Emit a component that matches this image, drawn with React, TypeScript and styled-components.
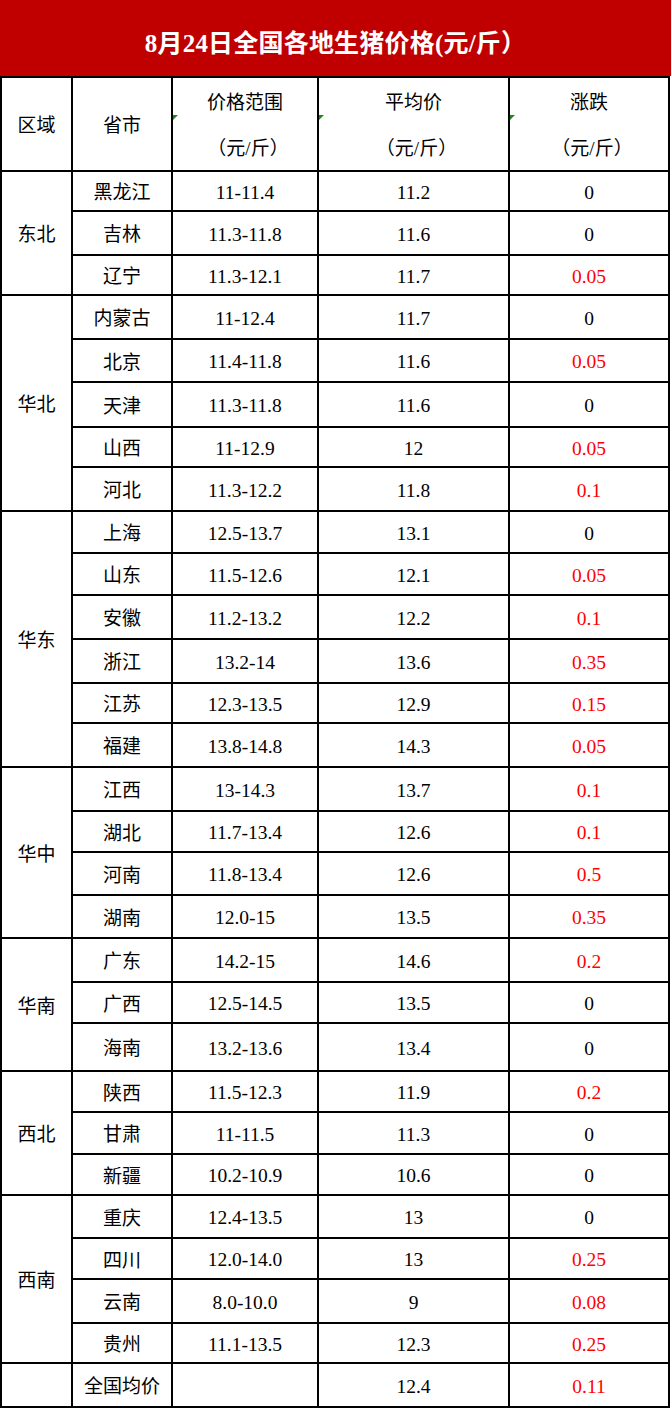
import React from "react";
import styled, { createGlobalStyle } from "styled-components";

const GlobalStyle = createGlobalStyle`
  html, body { margin: 0; padding: 0; background: #ffffff; }
  body { font-family: "Liberation Serif", "Noto Sans CJK SC", serif; }
`;

const Page = styled.div`
  width: 671px;
  display: flex;
  flex-direction: column;
`;

const Banner = styled.div`
  height: 76px;
  background: #c00000;
  color: #ffffff;
  display: flex;
  align-items: center;
  justify-content: center;
  font-family: "Liberation Serif", "Noto Sans CJK SC", serif;
  font-weight: 700;
  font-size: 25px;
  letter-spacing: 0.2px;
  padding-top: 6px;
  box-sizing: border-box;
`;

const Grid = styled.div<{ $rows: string }>`
  width: 670px;
  box-sizing: border-box;
  display: grid;
  grid-template-columns: 69px 98px 144px 189px 158px;
  grid-template-rows: ${(p) => p.$rows};
  gap: 2px;
  padding: 2px;
  background: #000000;
`;

const Cell = styled.div<{ $span?: number; $red?: boolean; $num?: boolean }>`
  position: relative;
  background: #ffffff;
  display: flex;
  align-items: center;
  justify-content: center;
  padding-top: 3px;
  box-sizing: border-box;
  grid-row: ${(p) => (p.$span ? `span ${p.$span}` : "auto")};
  color: ${(p) => (p.$red ? "#ff0000" : "#000000")};
  font-family: "Liberation Serif", "Noto Sans CJK SC", serif;
  font-size: ${(p) => (p.$num ? "19.5px" : "19px")};
  line-height: 1;
  white-space: nowrap;
`;

const HeadCell = styled.div`
  position: relative;
  background: #ffffff;
  display: flex;
  flex-direction: column;
  align-items: center;
  justify-content: center;
  padding-top: 3px;
  box-sizing: border-box;
  font-family: "Liberation Serif", "Noto Sans CJK SC", serif;
  font-size: 19px;
  line-height: 46px;
  color: #000000;
`;

const Unit = styled.span`
  padding-left: 6px;
`;

const Flag = styled.span`
  position: absolute;
  left: 0;
  top: 37px;
  width: 0;
  height: 0;
  border-top: 5px solid #1e8a1e;
  border-right: 5px solid transparent;
`;

type Row = { prov: string; range: string; avg: string; chg: string };
type Region = { name: string; rows: Row[] };

const regions: Region[] = [
  {
    name: "东北",
    rows: [
      { prov: "黑龙江", range: "11-11.4", avg: "11.2", chg: "0" },
      { prov: "吉林", range: "11.3-11.8", avg: "11.6", chg: "0" },
      { prov: "辽宁", range: "11.3-12.1", avg: "11.7", chg: "0.05" },
    ],
  },
  {
    name: "华北",
    rows: [
      { prov: "内蒙古", range: "11-12.4", avg: "11.7", chg: "0" },
      { prov: "北京", range: "11.4-11.8", avg: "11.6", chg: "0.05" },
      { prov: "天津", range: "11.3-11.8", avg: "11.6", chg: "0" },
      { prov: "山西", range: "11-12.9", avg: "12", chg: "0.05" },
      { prov: "河北", range: "11.3-12.2", avg: "11.8", chg: "0.1" },
    ],
  },
  {
    name: "华东",
    rows: [
      { prov: "上海", range: "12.5-13.7", avg: "13.1", chg: "0" },
      { prov: "山东", range: "11.5-12.6", avg: "12.1", chg: "0.05" },
      { prov: "安徽", range: "11.2-13.2", avg: "12.2", chg: "0.1" },
      { prov: "浙江", range: "13.2-14", avg: "13.6", chg: "0.35" },
      { prov: "江苏", range: "12.3-13.5", avg: "12.9", chg: "0.15" },
      { prov: "福建", range: "13.8-14.8", avg: "14.3", chg: "0.05" },
    ],
  },
  {
    name: "华中",
    rows: [
      { prov: "江西", range: "13-14.3", avg: "13.7", chg: "0.1" },
      { prov: "湖北", range: "11.7-13.4", avg: "12.6", chg: "0.1" },
      { prov: "河南", range: "11.8-13.4", avg: "12.6", chg: "0.5" },
      { prov: "湖南", range: "12.0-15", avg: "13.5", chg: "0.35" },
    ],
  },
  {
    name: "华南",
    rows: [
      { prov: "广东", range: "14.2-15", avg: "14.6", chg: "0.2" },
      { prov: "广西", range: "12.5-14.5", avg: "13.5", chg: "0" },
      { prov: "海南", range: "13.2-13.6", avg: "13.4", chg: "0" },
    ],
  },
  {
    name: "西北",
    rows: [
      { prov: "陕西", range: "11.5-12.3", avg: "11.9", chg: "0.2" },
      { prov: "甘肃", range: "11-11.5", avg: "11.3", chg: "0" },
      { prov: "新疆", range: "10.2-10.9", avg: "10.6", chg: "0" },
    ],
  },
  {
    name: "西南",
    rows: [
      { prov: "重庆", range: "12.4-13.5", avg: "13", chg: "0" },
      { prov: "四川", range: "12.0-14.0", avg: "13", chg: "0.25" },
      { prov: "云南", range: "8.0-10.0", avg: "9", chg: "0.08" },
      { prov: "贵州", range: "11.1-13.5", avg: "12.3", chg: "0.25" },
    ],
  },
];

const rowHeights = [
  92, 38, 42, 38, 42, 41, 43, 38, 42, 40, 40, 42, 42, 38, 42, 42, 39, 41, 41,
  42, 39, 46, 39, 40, 39, 41, 39, 42, 38, 42,
];

const rowsTemplate = rowHeights.map((h) => `${h}px`).join(" ");

export default function App() {
  return (
    <Page>
      <GlobalStyle />
      <Banner>8月24日全国各地生猪价格(元/斤）</Banner>
      <Grid $rows={rowsTemplate}>
        <HeadCell>区域</HeadCell>
        <HeadCell>省市</HeadCell>
        <HeadCell>
          <Flag />
          <span>价格范围</span>
          <Unit>（元/斤）</Unit>
        </HeadCell>
        <HeadCell>
          <Flag />
          <span>平均价</span>
          <Unit>（元/斤）</Unit>
        </HeadCell>
        <HeadCell>
          <Flag />
          <span>涨跌</span>
          <Unit>（元/斤）</Unit>
        </HeadCell>
        {regions.map((region) =>
          region.rows.map((r, i) => (
            <React.Fragment key={region.name + r.prov}>
              {i === 0 && <Cell $span={region.rows.length}>{region.name}</Cell>}
              <Cell>{r.prov}</Cell>
              <Cell $num>{r.range}</Cell>
              <Cell $num>{r.avg}</Cell>
              <Cell $num $red={r.chg !== "0"}>
                {r.chg}
              </Cell>
            </React.Fragment>
          ))
        )}
        <Cell />
        <Cell>全国均价</Cell>
        <Cell />
        <Cell $num>12.4</Cell>
        <Cell $num $red>
          0.11
        </Cell>
      </Grid>
    </Page>
  );
}
